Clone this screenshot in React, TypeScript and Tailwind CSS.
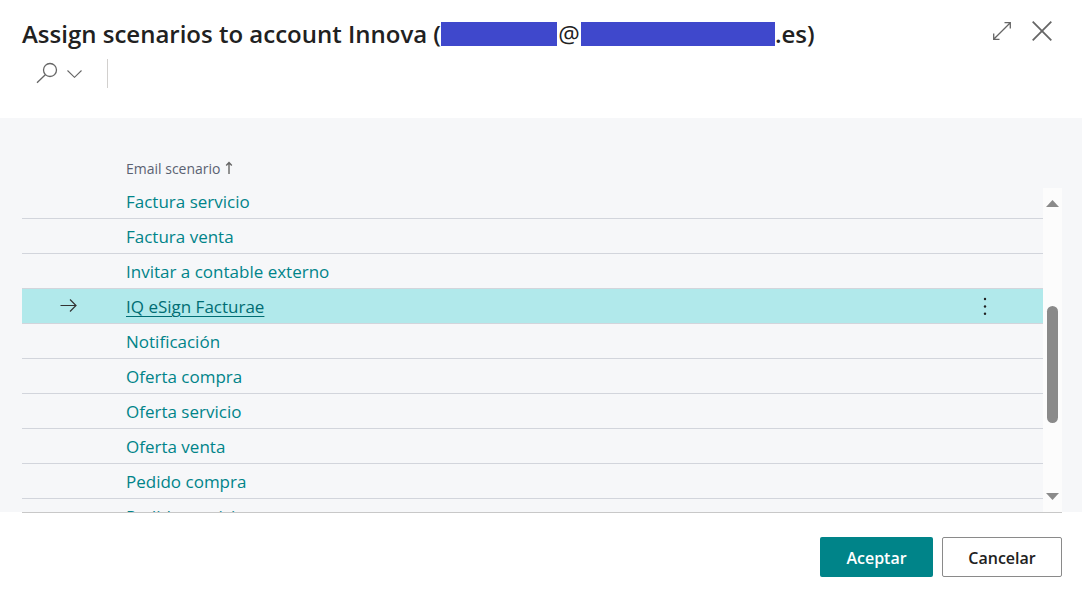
import React, { useState } from 'react';

const scenarios = [
  'Factura servicio',
  'Factura venta',
  'Invitar a contable externo',
  'IQ eSign Facturae',
  'Notificación',
  'Oferta compra',
  'Oferta servicio',
  'Oferta venta',
  'Pedido compra',
  'Pedido servicio',
];

function Toolbar() {
  return (
    <div className="flex items-center h-[30px] pl-[14px]">
      <button aria-label="Search" className="flex items-center gap-2 text-[#666666]">
        <svg width="22" height="22" viewBox="0 0 22 22" fill="none" stroke="currentColor" strokeWidth="1.3">
          <circle cx="14" cy="8" r="6.5" />
          <path d="M9.3 12.7 1 20.7" />
        </svg>
        <svg width="16" height="10" viewBox="0 0 16 10" fill="none" stroke="currentColor" strokeWidth="1.1">
          <path d="M1.5 2.5 8.5 9.3 15.5 2.5" />
        </svg>
      </button>
      <div className="ml-[25px] w-px h-[29px] bg-[#d2d0ce]" />
    </div>
  );
}

function Scrollbar() {
  return (
    <div aria-hidden="true" className="flex flex-col items-center w-[19px] mt-[70px] py-3 bg-[#fcfcfc]">
      <svg width="13" height="7" viewBox="0 0 13 7" fill="#8a8a8a">
        <path d="M6.5 0 13 7H0z" />
      </svg>
      <div className="grow-[99] basis-0" />
      <div className="grow-[117] basis-0 w-[11px] rounded-full bg-[#8a8a8a]" />
      <div className="grow-[70] basis-0" />
      <svg width="13" height="7" viewBox="0 0 13 7" fill="#8a8a8a">
        <path d="M0 0H13L6.5 7z" />
      </svg>
    </div>
  );
}

export default function App() {
  const [selected, setSelected] = useState('IQ eSign Facturae');

  return (
    <div className="flex flex-col h-screen bg-white overflow-hidden font-['Open_Sans',sans-serif] text-[#212121]">
      <header className="shrink-0 h-[118px] pl-[22px] pr-[30px] pt-4">
        <div className="flex items-start justify-between">
          <h1 className="flex items-center h-[36px] text-2xl font-semibold whitespace-nowrap">
            Assign scenarios to account Innova (
            <span className="w-[116px] h-6 bg-[#3f48cc]" />
            <span className="w-6 text-center font-normal">@</span>
            <span className="w-[194px] h-6 bg-[#3f48cc]" />
            .es)
          </h1>
          <div className="flex items-center gap-5 h-[30px] text-[#666666]">
            <button aria-label="Expand">
              <svg width="20" height="20" viewBox="0 0 20 20" fill="none" stroke="currentColor" strokeWidth="1.3">
                <path d="M1.7 18.3 18.3 1.7M12.5 1.7h5.8v5.8M1.7 12.5v5.8h5.8" />
              </svg>
            </button>
            <button aria-label="Close">
              <svg width="20" height="20" viewBox="0 0 20 20" fill="none" stroke="currentColor" strokeWidth="1.8">
                <path d="M.7.7l18.6 18.6M19.3.7.7 19.3" />
              </svg>
            </button>
          </div>
        </div>
        <div className="mt-[6px]">
          <Toolbar />
        </div>
      </header>

      <main className="flex flex-1 min-h-0 pl-[22px] pr-5 overflow-hidden bg-[#f6f7f9]">
        <div className="flex-1 min-w-0">
          <table className="w-full table-fixed border-separate border-spacing-0 text-left">
            <thead>
              <tr className="h-[66px]">
                <th className="w-[104px]" />
                <th className="p-0 pt-9 font-normal text-sm text-[#5b6272]">
                  <span className="flex items-center gap-1">
                    Email scenario
                    <svg width="8" height="16" viewBox="0 0 8 16" fill="none" stroke="#666666" strokeWidth="1.4">
                      <path d="M4 13V1.5M1.2 4.5 4 1.5l2.8 3" />
                    </svg>
                  </span>
                </th>
                <th className="w-[116px]" />
              </tr>
            </thead>
            <tbody>
              {scenarios.map((name) => {
                const active = name === selected;
                return (
                  <tr
                    key={name}
                    onClick={() => setSelected(name)}
                    className={active ? 'h-[35px] bg-[#b1e9eb]' : 'h-[35px]'}
                  >
                    <td className="p-0 pl-[38px] border-b border-[#d2d5dc]">
                      {active && (
                        <svg width="18" height="14" viewBox="0 0 18 14" fill="none" stroke="#333333" strokeWidth="1.2">
                          <path d="M.5 6.5h15.5M10 .5l6 6-6 6" />
                        </svg>
                      )}
                    </td>
                    <td className="p-0 pt-0.5 border-b border-[#d2d5dc] text-[17px] leading-6">
                      <a
                        href="#"
                        className={active ? 'text-[#006d73] underline underline-offset-3 decoration-1' : 'text-[#008489]'}
                      >
                        {name}
                      </a>
                    </td>
                    <td className="p-0 pl-[56px] border-b border-[#d2d5dc]">
                      {active && (
                        <button aria-label="More options" className="block">
                          <svg width="4" height="18" viewBox="0 0 4 18" fill="#212121">
                            <circle cx="2" cy="2" r="1.2" />
                            <circle cx="2" cy="9.5" r="1.2" />
                            <circle cx="2" cy="16.8" r="1.2" />
                          </svg>
                        </button>
                      )}
                    </td>
                  </tr>
                );
              })}
            </tbody>
          </table>
        </div>
        <Scrollbar />
      </main>

      <footer className="shrink-0 ml-[22px] mr-5 flex justify-end gap-[9px] pt-6 pb-4 border-t border-[#c8c8c8]">
        <button className="w-[113px] h-10 pt-0.5 rounded-xs bg-[#008489] text-white text-base font-semibold">Aceptar</button>
        <button className="w-[120px] h-10 pt-0.5 rounded-xs border border-[#8a8a8a] bg-white text-base font-semibold">
          Cancelar
        </button>
      </footer>
    </div>
  );
}
